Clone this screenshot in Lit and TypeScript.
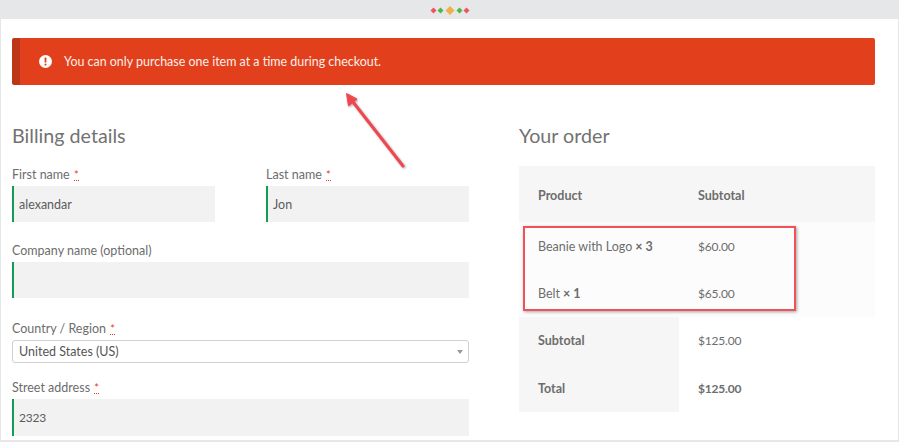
import { LitElement, html, css, svg } from "lit";
import { customElement } from "lit/decorators.js";

@customElement("app-root")
export class AppRoot extends LitElement {
  static styles = css`
    :host { display: block; width: 899px; height: 442px; position: relative; overflow: hidden; background: #fff;
      font-family: Lato, "Noto Sans", sans-serif; font-size: 12.5px; color: #6d6d6d; box-sizing: border-box; }
    * { box-sizing: border-box; }
    .top { height: 19px; background: #e6e7e8; display: flex; align-items: center; justify-content: center; padding-top: 2px; }
    .frame { height: 423px; border: solid #e6e7e8; border-width: 0 1px 2px 1px; padding: 19px 23px 0 11px; overflow: hidden; }
    .alert { height: 47px; background: #e2401c; border-left: 8px solid #bd3618; border-radius: 2px; color: #fdeee9;
      display: flex; align-items: center; gap: 12px; padding-left: 19px; font-size: 12.45px; }
    .alert svg { flex: none; }
    .cols { display: grid; grid-template-columns: 457px 356px; gap: 50px; margin-top: 38px; }
    h3 { margin: 0; font-weight: 400; font-size: 19.7px; line-height: 26px; color: #727272; }
    .fields { display: flex; flex-direction: column; margin-top: 18px; }
    .row2 { display: grid; grid-template-columns: 203px 203px; gap: 51px; }
    .field { display: flex; flex-direction: column; margin-bottom: 21px; }
    .field.company { margin-bottom: 23px; }
    .field.country { margin-bottom: 17px; }
    label { font-size: 12.5px; line-height: 16px; height: 16px; margin-bottom: 3px; color: #6d6d6d; white-space: nowrap; }
    abbr { color: #e2401c; font-size: 11px; line-height: 10px; display: inline-block; border-bottom: 1px dotted #e2401c; margin-left: 1px; }
    .input { height: 36px; background: #f2f2f2; border-left: 2px solid #0f9d58; display: flex; align-items: center; padding-left: 5px; font-size: 12.5px; color: #5c5c5c; }
    .input.last { height: 37px; }
    .num { font-size: 12px; letter-spacing: -.2px; }
    .select { height: 23px; border: 1px solid #d0d0d0; border-radius: 3px; display: flex; align-items: center; justify-content: space-between; padding: 0 5px 0 6px; font-size: 12.5px; color: #555; background: #fff; }
    .caret { width: 0; height: 0; border: 3px solid transparent; border-top: 4px solid #999; border-bottom: 0; }
    .order { margin-top: 17px; display: grid; grid-template-columns: 160px 196px; grid-template-rows: 56px 48px 47px 47px 48px; font-size: 12.5px; }
    .cell { display: flex; align-items: center; padding-left: 19px; }
    .head { background: #f6f6f6; font-weight: 700; padding-top: 2px; }
    .item { background: #fcfcfc; }
    .foot { background: #f6f6f6; font-weight: 700; }
    .val { background: #fff; }
    .total { font-weight: 700; }
    .qty { font-weight: 700; margin-left: 3px; }
    .box { position: absolute; left: 523px; top: 226px; width: 273px; height: 85px; border: 2px solid #f0525a; box-shadow: 1px 1px 3px rgba(0,0,0,.35); }
    .arrow { position: absolute; left: 340px; top: 88px; filter: drop-shadow(1px 1px 1px rgba(0,0,0,.35)); }
  `;

  field(name: string, value: string, last = false) {
    return html`<div class="field"><label>${name} <abbr>*</abbr></label><div class="input ${last ? "last num" : ""}">${value}</div></div>`;
  }

  render() {
    const marks: [number, string, number][] = [[3.5,"#f2545b",3],[10.5,"#4fb648",3],[20,"#efb049",4.5],[29.5,"#4fb648",3],[36.5,"#f2545b",3]];
    return html`
      <div class="top">
        <svg width="40" height="9" viewBox="0 0 40 9">
          ${marks.map(([x,c,r]) => svg`<path d="M${x} ${4.5-r}L${x+r} 4.5L${x} ${4.5+r}L${x-r} 4.5Z" fill=${c}/>`)}
        </svg>
      </div>
      <div class="frame">
        <div class="alert">
          <svg width="13" height="13" viewBox="0 0 13 13"><circle cx="6.5" cy="6.5" r="6.5" fill="#fff"/><rect x="5.6" y="2.6" width="1.8" height="5" rx=".6" fill="#e2401c"/><circle cx="6.5" cy="9.6" r="1.05" fill="#e2401c"/></svg>
          <span>You can only purchase one item at a time during checkout.</span>
        </div>
        <div class="cols">
          <div>
            <h3>Billing details</h3>
            <div class="fields">
              <div class="row2">
                ${this.field("First name", "alexandar")}
                ${this.field("Last name", "Jon")}
              </div>
              <div class="field company">
                <label>Company name (optional)</label><div class="input"></div>
              </div>
              <div class="field country">
                <label>Country / Region <abbr>*</abbr></label>
                <div class="select"><span>United States (US)</span><span class="caret"></span></div>
              </div>
              ${this.field("Street address", "2323", true)}
            </div>
          </div>
          <div>
            <h3>Your order</h3>
            <div class="order">
              <div class="cell head">Product</div><div class="cell head">Subtotal</div>
              <div class="cell item">Beanie with Logo <span class="qty">× 3</span></div><div class="cell item num">$60.00</div>
              <div class="cell item">Belt <span class="qty">× 1</span></div><div class="cell item num">$65.00</div>
              <div class="cell foot">Subtotal</div><div class="cell val num">$125.00</div>
              <div class="cell foot">Total</div><div class="cell val total num">$125.00</div>
            </div>
          </div>
        </div>
      </div>
      <div class="box"></div>
      <svg class="arrow" width="70" height="84" viewBox="0 0 70 84">
        <path d="M63 78L13 14" stroke="#f2464f" stroke-width="3" stroke-linecap="round" fill="none"/>
        <path d="M6.5 5.5L17 11L8.5 18Z" fill="#f2464f" stroke="#f2464f" stroke-linejoin="round"/>
      </svg>
    `;
  }
}
